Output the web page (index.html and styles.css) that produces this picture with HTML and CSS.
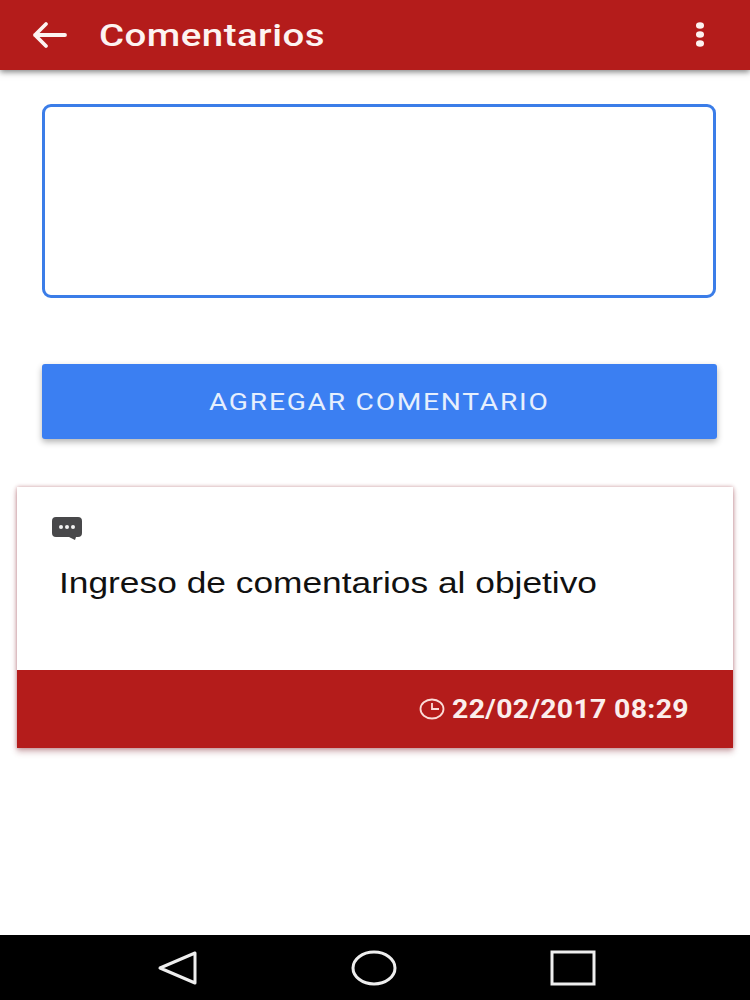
FILE: index.html
```html
<!DOCTYPE html>
<html lang="es">
<head>
  <meta charset="UTF-8">
  <meta name="viewport" content="width=device-width, initial-scale=1.0">
  <title>Comentarios</title>
  <link rel="stylesheet" href="styles.css">
</head>
<body>

  <div class="screen">
    <header class="toolbar">
      <svg class="back-icon" viewBox="0 0 36 28" width="36" height="28">
        <path d="M33 14H3M14 3L3 14l11 11" fill="none" stroke="#fdf3f1" stroke-width="3.8" stroke-linecap="round" stroke-linejoin="round"/>
      </svg>
      <h1 class="title"><span class="title-text">Comentarios</span></h1>
      <svg class="menu-icon" viewBox="0 0 10 26" width="10" height="26">
        <ellipse cx="5" cy="3.5" rx="4" ry="3.2" fill="#fdf3f1"/>
        <ellipse cx="5" cy="12.5" rx="4" ry="3.2" fill="#fdf3f1"/>
        <ellipse cx="5" cy="21.5" rx="4" ry="3.2" fill="#fdf3f1"/>
      </svg>
    </header>

    <main class="content">
      <textarea class="comment-input"></textarea>
      <button class="add-button"><span class="add-label">AGREGAR COMENTARIO</span></button>

      <section class="card">
        <div class="card-body">
          <svg class="bubble-icon" viewBox="0 0 32 25" width="32" height="25">
            <path d="M5 1h22a4 4 0 0 1 4 4v12a4 4 0 0 1-4 4h-2l-1 3-6-3H5a4 4 0 0 1-4-4V5a4 4 0 0 1 4-4z" fill="#48484a"/>
            <circle cx="10" cy="11" r="2" fill="#f2f2f2"/>
            <circle cx="16" cy="11" r="2" fill="#f2f2f2"/>
            <circle cx="22" cy="11" r="2" fill="#f2f2f2"/>
          </svg>
          <p class="comment-text">Ingreso de comentarios al objetivo</p>
        </div>
        <div class="card-footer">
          <svg class="clock-icon" viewBox="0 0 26 22" width="26" height="22">
            <ellipse cx="13" cy="11" rx="11.5" ry="9.5" fill="none" stroke="#fbdcd8" stroke-width="1.8"/>
            <path d="M13 5v6h7" fill="none" stroke="#fbdcd8" stroke-width="1.8"/>
          </svg>
          <span class="comment-date">22/02/2017 08:29</span>
        </div>
      </section>
    </main>

    <nav class="nav-bar">
      <svg viewBox="0 0 40 36" width="40" height="36">
        <path d="M38 3v30L3 18z" fill="none" stroke="#eee" stroke-width="3" stroke-linejoin="round"/>
      </svg>
      <svg viewBox="0 0 46 36" width="46" height="36">
        <ellipse cx="23" cy="18" rx="21" ry="16" fill="none" stroke="#eee" stroke-width="3"/>
      </svg>
      <svg viewBox="0 0 46 36" width="46" height="36">
        <rect x="2" y="2" width="42" height="32" fill="none" stroke="#eee" stroke-width="3"/>
      </svg>
    </nav>
  </div>

</body>
</html>
```

FILE: styles.css
```css
html, body {
  margin: 0;
  height: 100%;
  background-color: white;
}

.screen {
  display: flex;
  flex-direction: column;
  height: 1000px;
  overflow: hidden;
  font-family: Roboto, "Liberation Sans", sans-serif;
}

.toolbar {
  display: flex;
  align-items: center;
  flex: none;
  height: 70px;
  padding: 0 45px 0 32px;
  background-color: #b41c1b;
  box-shadow: 0 2px 6px rgba(0, 0, 0, 0.5);
  z-index: 1;
}

.back-icon {
  flex: none;
  margin-right: 31px;
}

.title {
  flex: 1;
  margin: 0;
  color: #fdf3f1;
  font-size: 32px;
  font-weight: 500;
  letter-spacing: 0.4px;
}

/* the source screenshot is stretched sideways, so the text is too */
.title-text {
  display: inline-block;
  transform: scaleX(1.2);
  transform-origin: left center;
}

.content {
  flex: 1;
  display: flex;
  flex-direction: column;
  padding: 34px 17px 0;
}

.comment-input {
  display: block;
  box-sizing: border-box;
  width: 674px;
  height: 194px;
  margin: 0 0 66px 25px;
  border: 3px solid #3b7de8;
  border-radius: 9px;
  outline: none;
  resize: none;
  background: white;
}

.add-button {
  width: 675px;
  height: 75px;
  margin: 0 0 48px 25px;
  border: none;
  border-radius: 3px;
  background-color: #3b7ff2;
  box-shadow: 0 3px 6px rgba(0, 0, 0, 0.3);
  color: #e6effd;
  font-family: Roboto, "Liberation Sans", sans-serif;
  font-size: 24px;
  letter-spacing: 1.5px;
}

.add-label {
  display: inline-block;
  transform: scaleX(1.173);
}

.card {
  width: 716px;
  box-shadow: 0 0 4px rgba(150, 40, 50, 0.45), 0 4px 6px rgba(120, 30, 40, 0.3);
}

.card-body {
  box-sizing: border-box;
  height: 183px;
  padding: 29px 0 0 34px;
  background-color: white;
}

.bubble-icon {
  display: block;
}

.comment-text {
  margin: 24px 0 0 8px;
  color: #111;
  font-family: "Liberation Sans", Arial, sans-serif;
  font-size: 29px;
  line-height: 36px;
  white-space: nowrap;
  transform: scaleX(1.218);
  transform-origin: left center;
}

.card-footer {
  display: flex;
  align-items: center;
  justify-content: flex-end;
  height: 78px;
  padding-right: 44px;
  background-color: #b41c1b;
}

.clock-icon {
  margin-right: 27px;
}

.comment-date {
  color: #fbeeec;
  font-size: 26px;
  font-weight: 700;
  letter-spacing: 0.3px;
  transform: scaleX(1.092);
  transform-origin: right center;
}

.nav-bar {
  display: flex;
  align-items: center;
  justify-content: space-between;
  flex: none;
  box-sizing: border-box;
  height: 65px;
  padding: 0 154px 0 157px;
  background-color: black;
}
```
